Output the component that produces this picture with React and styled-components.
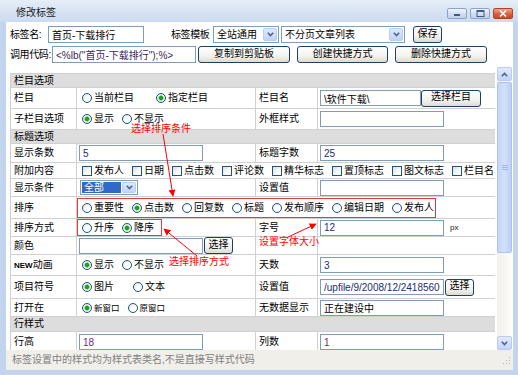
import React from "react";
import styled, { createGlobalStyle } from "styled-components";

const GlobalStyle = createGlobalStyle`
  html, body { margin: 0; padding: 0; background: #ffffff; }
  body {
    font-family: "Liberation Sans", "Noto Sans CJK SC", sans-serif;
    font-size: 10px;
    line-height: 12px;
    color: #000;
  }
  * { box-sizing: border-box; }
`;

const Window = styled.div`
  position: relative;
  width: 518px;
  height: 375px;
  display: flex;
  flex-direction: column;
  background: #c3d5ee;
  overflow: hidden;
`;

const TitleBar = styled.div`
  flex: none;
  height: 22px;
  display: flex;
  justify-content: space-between;
  align-items: flex-start;
  padding: 0 5px 0 16px;
  background: linear-gradient(#e6eef9, #d6e2f3 55%, #cddbef);
`;

const Title = styled.div`
  margin-top: 8px;
  line-height: 10px;
  color: #1b1b1b;
`;

const Controls = styled.div`
  display: flex;
  gap: 3px;
  margin-top: 8px;
`;

const CtlBtn = styled.div`
  width: 20px;
  height: 11px;
  display: flex;
  align-items: center;
  justify-content: center;
  border-radius: 2px;
  border: 1px solid ${(p) => (p.$close ? "#a8452c" : "#8aa4cb")};
  background: ${(p) =>
    p.$close
      ? "linear-gradient(#f3a38a, #dc5b3c 60%, #c9482b)"
      : "linear-gradient(#f1f5fc, #cfdcef 60%, #c0d1ea)"};
`;

const Frame = styled.div`
  flex: 1;
  display: flex;
  min-height: 0;
  padding: 0 5px 5px 6px;
`;

const Body = styled.div`
  flex: 1;
  display: flex;
  flex-direction: column;
  background: #ffffff;
  min-width: 0;
`;

const TopForm = styled.div`
  flex: none;
  height: 45px;
  display: flex;
  flex-direction: column;
  gap: 3px;
  padding: 4px 0 0 4px;
`;

const FormRow = styled.div`
  display: flex;
  align-items: center;
  height: 17px;
`;

const FormLabel = styled.span`
  flex: none;
  width: ${(p) => p.$w}px;
  margin-left: ${(p) => p.$ml || 0}px;
  white-space: nowrap;
  letter-spacing: -0.4px;
`;

const TextInput = styled.input`
  flex: none;
  width: ${(p) => p.$w}px;
  height: ${(p) => p.$h || 16}px;
  margin: 0;
  padding: 0 3px;
  border: 1px solid #7f9db9;
  background: #fff;
  font: inherit;
  font-size: 10px;
  color: ${(p) => p.$tone || "#000"};
  outline: none;
`;

const Btn = styled.button`
  flex: none;
  width: ${(p) => p.$w}px;
  height: ${(p) => p.$h || 17}px;
  margin: 0 0 0 ${(p) => p.$ml || 0}px;
  padding: 0 0 2px;
  border: 1px solid #1f3f63;
  border-radius: 3px;
  background: linear-gradient(#ffffff, #f3f2ee 60%, #dedbd2);
  font: inherit;
  font-size: 10px;
  line-height: 12px;
  color: #000;
  white-space: nowrap;
`;

const SelectBox = styled.div`
  flex: none;
  display: flex;
  width: ${(p) => p.$w}px;
  height: ${(p) => p.$h}px;
  margin-left: ${(p) => p.$ml || 0}px;
  padding: 1px;
  border: 1px solid #7f9db9;
  background: #fff;
`;

const SelectText = styled.span`
  flex: 1;
  display: flex;
  align-items: center;
  padding-left: 2px;
  margin-right: 1px;
  background: ${(p) => (p.$sel ? "#316ac5" : "transparent")};
  color: ${(p) => (p.$sel ? "#fff" : "#000")};
  white-space: nowrap;
  overflow: hidden;
`;

const SelectArrow = styled.span`
  flex: none;
  width: 14px;
  display: flex;
  align-items: center;
  justify-content: center;
  border: 1px solid #b8ccf4;
  border-radius: 2px;
  background: linear-gradient(#dfe9fe, #c1d3fa);
`;

const ScrollArea = styled.div`
  flex: 1;
  min-height: 0;
  display: flex;
  overflow: hidden;
`;

const TableWrap = styled.div`
  flex: 1;
  overflow: hidden;
  padding: 6px 0 0 4px;
`;

const Grid = styled.table`
  width: 486px;
  table-layout: fixed;
  border-collapse: collapse;
`;

const Col = styled.col`
  width: ${(p) => p.$w}px;
`;

const Row = styled.tr`
  height: ${(p) => p.$h}px;
`;

const Cell = styled.td`
  border: 1px solid #d0d0d0;
  padding: 0 0 0 3px;
  vertical-align: middle;
  white-space: nowrap;
  overflow: hidden;
`;

const SectionCell = styled(Cell)`
  background: #dddddd;
`;

const LabelCell = styled(Cell)``;

const FieldCell = styled(Cell)`
  padding-left: 2px;
`;

const Line = styled.div`
  display: flex;
  align-items: center;
`;

const Option = styled.span`
  flex: none;
  display: inline-flex;
  align-items: center;
  margin-right: ${(p) => (p.$gap ?? 5)}px;
  font-size: ${(p) => (p.$small ? 8.5 : 10)}px;
`;

const Radio = styled.span`
  flex: none;
  width: 10px;
  height: 10px;
  margin: 0 2px 0 3px;
  border: 1px solid #1d5281;
  border-radius: 50%;
  background: ${(p) =>
    p.$on
      ? "radial-gradient(circle, #1f9f1f 0 1.6px, #7fcf7f 2.4px, #f6f6f2 3px, #dcdbd4 100%)"
      : "radial-gradient(circle at 65% 65%, #ffffff 0 35%, #dcdbd4 100%)"};
`;

const Check = styled.span`
  flex: none;
  width: 10px;
  height: 10px;
  margin: 0 2px 0 3px;
  border: 1px solid #1d5281;
  background: linear-gradient(135deg, #dcdcd5, #ffffff 70%);
`;

const Mark = styled.span`
  flex: none;
  display: inline-flex;
  align-items: center;
  height: ${(p) => p.$h}px;
  margin-left: -2px;
  padding: 0 ${(p) => p.$pr}px 0 1px;
  border: 1px solid #e6393c;
`;

const Unit = styled.span`
  margin-left: 6px;
  font-size: 8px;
  color: #222;
`;

const Tiny = styled.span`
  font-size: 8px;
  font-weight: bold;
`;

const ScrollBar = styled.div`
  flex: none;
  width: 15px;
  margin: 0 1px 0 2px;
  display: flex;
  flex-direction: column;
  background: linear-gradient(90deg, #f1efe9, #fdfdfa);
`;

const ScrollBtn = styled.div`
  flex: none;
  height: 14px;
  display: flex;
  align-items: center;
  justify-content: center;
  border: 1px solid #b9cbf3;
  border-radius: 2px;
  background: linear-gradient(#e1eafd, #c3d4f8);
`;

const Thumb = styled.div`
  flex: none;
  height: ${(p) => p.$h}px;
  margin-top: 1px;
  display: flex;
  flex-direction: column;
  align-items: center;
  justify-content: center;
  gap: 1px;
  border: 1px solid #adc2ef;
  border-radius: 2px;
  background: linear-gradient(90deg, #c4d5f8, #d3e0fb 50%, #bccff6);
`;

const Grip = styled.span`
  width: 6px;
  height: 1px;
  background: #eef3fd;
  border-bottom: 1px solid #9fb6e6;
`;

const Track = styled.div`
  flex: 1;
`;

const StatusBar = styled.div`
  flex: none;
  height: 20px;
  display: flex;
  align-items: center;
  justify-content: space-between;
  padding: 0 2px 0 6px;
  background: #f1efea;
  color: #808080;
`;

const Overlay = styled.svg`
  position: absolute;
  left: 0;
  top: 0;
  pointer-events: none;
`;

const Note = styled.span`
  position: absolute;
  left: ${(p) => p.$x}px;
  top: ${(p) => p.$y}px;
  color: #ff0000;
  font-size: 10px;
  line-height: 10px;
  white-space: nowrap;
`;

const Chevron = ({ up }) => (
  <svg width="7" height="5" viewBox="0 0 7 5">
    <path
      d={up ? "M0.8 4.2 L3.5 1.4 L6.2 4.2" : "M0.8 0.8 L3.5 3.6 L6.2 0.8"}
      fill="none"
      stroke="#4d6185"
      strokeWidth="1.5"
    />
  </svg>
);

const Select = ({ w, h = 17, ml, text, selected }) => (
  <SelectBox $w={w} $h={h} $ml={ml}>
    <SelectText $sel={selected}>{text}</SelectText>
    <SelectArrow>
      <Chevron />
    </SelectArrow>
  </SelectBox>
);

export default function App() {
  return (
    <>
      <GlobalStyle />
      <Window>
        <TitleBar>
          <Title>修改标签</Title>
          <Controls>
            <CtlBtn>
              <svg width="8" height="7" viewBox="0 0 8 7">
                <rect x="1" y="4" width="6" height="2" fill="#3e5a86" />
              </svg>
            </CtlBtn>
            <CtlBtn>
              <svg width="9" height="7" viewBox="0 0 9 7">
                <rect x="1" y="0.5" width="7" height="6" fill="none" stroke="#3e5a86" />
                <rect x="1" y="0.5" width="7" height="1.5" fill="#3e5a86" />
              </svg>
            </CtlBtn>
            <CtlBtn $close>
              <svg width="8" height="7" viewBox="0 0 8 7">
                <path d="M1 0.5 L7 6.5 M7 0.5 L1 6.5" stroke="#fff" strokeWidth="1.6" />
              </svg>
            </CtlBtn>
          </Controls>
        </TitleBar>
        <Frame>
          <Body>
            <TopForm>
              <FormRow>
                <FormLabel $w={38}>标签名:</FormLabel>
                <TextInput $w={96} $h={17} defaultValue="首页-下载排行" />
                <FormLabel $w={42} $ml={27}>标签模板</FormLabel>
                <Select w={66} text="全站通用" />
                <Select w={124} ml={2} text="不分页文章列表" />
                <Btn $w={29} $ml={8}>保存</Btn>
              </FormRow>
              <FormRow>
                <FormLabel $w={42}>调用代码:</FormLabel>
                <TextInput $w={144} $h={17} $tone="#3a1f5c" defaultValue={'<%lb("首页-下载排行");%>'} />
                <Btn $w={92} $ml={2}>复制到剪贴板</Btn>
                <Btn $w={91} $ml={7}>创建快捷方式</Btn>
                <Btn $w={92} $ml={7}>删除快捷方式</Btn>
              </FormRow>
            </TopForm>

            <ScrollArea>
              <TableWrap>
                <Grid>
                  <colgroup>
                    <Col $w={66} />
                    <Col $w={179} />
                    <Col $w={62} />
                    <Col $w={179} />
                  </colgroup>
                  <tbody>
                    <Row $h={14}>
                      <SectionCell colSpan={4}>栏目选项</SectionCell>
                    </Row>
                    <Row $h={21}>
                      <LabelCell>栏目</LabelCell>
                      <FieldCell>
                        <Line>
                          <Option $gap={19}><Radio />当前栏目</Option>
                          <Option><Radio $on />指定栏目</Option>
                        </Line>
                      </FieldCell>
                      <LabelCell>栏目名</LabelCell>
                      <FieldCell>
                        <Line>
                          <TextInput $w={101} defaultValue={"\\软件下载\\"} />
                          <Btn $w={60}>选择栏目</Btn>
                        </Line>
                      </FieldCell>
                    </Row>
                    <Row $h={21}>
                      <LabelCell>子栏目选项</LabelCell>
                      <FieldCell>
                        <Line>
                          <Option><Radio $on />显示</Option>
                          <Option><Radio />不显示</Option>
                        </Line>
                      </FieldCell>
                      <LabelCell>外框样式</LabelCell>
                      <FieldCell>
                        <Line>
                          <TextInput $w={124} defaultValue="" />
                        </Line>
                      </FieldCell>
                    </Row>
                    <Row $h={14}>
                      <SectionCell colSpan={4}>标题选项</SectionCell>
                    </Row>
                    <Row $h={19}>
                      <LabelCell>显示条数</LabelCell>
                      <FieldCell>
                        <Line>
                          <TextInput $w={124} $tone="#1c2c6c" defaultValue="5" />
                        </Line>
                      </FieldCell>
                      <LabelCell>标题字数</LabelCell>
                      <FieldCell>
                        <Line>
                          <TextInput $w={124} $tone="#1c2c6c" defaultValue="25" />
                        </Line>
                      </FieldCell>
                    </Row>
                    <Row $h={16}>
                      <LabelCell>附加内容</LabelCell>
                      <FieldCell colSpan={3}>
                        <Line>
                          <Option><Check />发布人</Option>
                          <Option><Check />日期</Option>
                          <Option><Check />点击数</Option>
                          <Option><Check />评论数</Option>
                          <Option><Check />精华标志</Option>
                          <Option><Check />置顶标志</Option>
                          <Option><Check />图文标志</Option>
                          <Option><Check />栏目名</Option>
                        </Line>
                      </FieldCell>
                    </Row>
                    <Row $h={18}>
                      <LabelCell>显示条件</LabelCell>
                      <FieldCell>
                        <Line>
                          <Select w={58} h={15} ml={1} text="全部" selected />
                        </Line>
                      </FieldCell>
                      <LabelCell>设置值</LabelCell>
                      <FieldCell>
                        <Line>
                          <TextInput $w={124} defaultValue="" />
                        </Line>
                      </FieldCell>
                    </Row>
                    <Row $h={22}>
                      <LabelCell>排序</LabelCell>
                      <FieldCell colSpan={3}>
                        <Line>
                          <Mark $h={20} $pr={1}>
                            <Option><Radio />重要性</Option>
                            <Option><Radio $on />点击数</Option>
                            <Option><Radio />回复数</Option>
                            <Option><Radio />标题</Option>
                            <Option><Radio />发布顺序</Option>
                            <Option><Radio />编辑日期</Option>
                            <Option $gap={0}><Radio />发布人</Option>
                          </Mark>
                        </Line>
                      </FieldCell>
                    </Row>
                    <Row $h={18}>
                      <LabelCell>排序方式</LabelCell>
                      <FieldCell>
                        <Line>
                          <Mark $h={17} $pr={7}>
                            <Option><Radio />升序</Option>
                            <Option $gap={0}><Radio $on />降序</Option>
                          </Mark>
                        </Line>
                      </FieldCell>
                      <LabelCell>字号</LabelCell>
                      <FieldCell>
                        <Line>
                          <TextInput $w={124} $tone="#1c2c6c" defaultValue="12" />
                          <Unit>px</Unit>
                        </Line>
                      </FieldCell>
                    </Row>
                    <Row $h={18}>
                      <LabelCell>颜色</LabelCell>
                      <FieldCell>
                        <Line>
                          <TextInput $w={124} defaultValue="" />
                          <Btn $w={29} $ml={1}>选择</Btn>
                        </Line>
                      </FieldCell>
                      <LabelCell />
                      <FieldCell />
                    </Row>
                    <Row $h={21}>
                      <LabelCell><Tiny>NEW</Tiny>动画</LabelCell>
                      <FieldCell>
                        <Line>
                          <Option><Radio $on />显示</Option>
                          <Option><Radio />不显示</Option>
                        </Line>
                      </FieldCell>
                      <LabelCell>天数</LabelCell>
                      <FieldCell>
                        <Line>
                          <TextInput $w={124} $tone="#1c2c6c" defaultValue="3" />
                        </Line>
                      </FieldCell>
                    </Row>
                    <Row $h={23}>
                      <LabelCell>项目符号</LabelCell>
                      <FieldCell>
                        <Line>
                          <Option $gap={16}><Radio $on />图片</Option>
                          <Option><Radio />文本</Option>
                        </Line>
                      </FieldCell>
                      <LabelCell>设置值</LabelCell>
                      <FieldCell>
                        <Line>
                          <TextInput $w={124} $tone="#1c2c6c" defaultValue="/upfile/9/2008/12/2418560091.gif" />
                          <Btn $w={29} $ml={1}>选择</Btn>
                        </Line>
                      </FieldCell>
                    </Row>
                    <Row $h={18}>
                      <LabelCell>打开在</LabelCell>
                      <FieldCell>
                        <Line>
                          <Option $small><Radio $on />新窗口</Option>
                          <Option $small><Radio />原窗口</Option>
                        </Line>
                      </FieldCell>
                      <LabelCell>无数据显示</LabelCell>
                      <FieldCell>
                        <Line>
                          <TextInput $w={124} defaultValue="正在建设中" />
                        </Line>
                      </FieldCell>
                    </Row>
                    <Row $h={15}>
                      <SectionCell colSpan={4}>行样式</SectionCell>
                    </Row>
                    <Row $h={21}>
                      <LabelCell>行高</LabelCell>
                      <FieldCell>
                        <Line>
                          <TextInput $w={124} $tone="#7a1f70" defaultValue="18" />
                        </Line>
                      </FieldCell>
                      <LabelCell>列数</LabelCell>
                      <FieldCell>
                        <Line>
                          <TextInput $w={124} $tone="#7a1f70" defaultValue="1" />
                        </Line>
                      </FieldCell>
                    </Row>
                  </tbody>
                </Grid>
              </TableWrap>
              <ScrollBar>
                <ScrollBtn>
                  <Chevron up />
                </ScrollBtn>
                <Thumb $h={171}>
                  <Grip />
                  <Grip />
                  <Grip />
                </Thumb>
                <Track />
                <ScrollBtn>
                  <Chevron />
                </ScrollBtn>
              </ScrollBar>
            </ScrollArea>

            <StatusBar>
              <span>标签设置中的样式均为样式表类名,不是直接写样式代码</span>
              <svg width="10" height="10" viewBox="0 0 10 10">
                <g fill="#b8b4a8">
                  <rect x="8" y="2" width="1" height="1" />
                  <rect x="5" y="5" width="1" height="1" />
                  <rect x="8" y="5" width="1" height="1" />
                  <rect x="2" y="8" width="1" height="1" />
                  <rect x="5" y="8" width="1" height="1" />
                  <rect x="8" y="8" width="1" height="1" />
                </g>
              </svg>
            </StatusBar>
          </Body>
        </Frame>

        <Overlay width="518" height="375" viewBox="0 0 518 375">
          <defs>
            <marker id="tip" viewBox="0 0 10 10" refX="9" refY="5" markerWidth="7" markerHeight="7" orient="auto">
              <path d="M0 0 L10 5 L0 10 z" fill="#ff0000" />
            </marker>
          </defs>
          <line x1="163" y1="134" x2="173" y2="196" stroke="#ff0000" strokeWidth="1" markerEnd="url(#tip)" />
          <line x1="197" y1="256" x2="164" y2="229" stroke="#ff0000" strokeWidth="1" markerEnd="url(#tip)" />
          <line x1="288" y1="237" x2="316" y2="224" stroke="#ff0000" strokeWidth="1" markerEnd="url(#tip)" />
        </Overlay>
        <Note $x={131} $y={124}>选择排序条件</Note>
        <Note $x={169} $y={257}>选择排序方式</Note>
        <Note $x={259} $y={237}>设置字体大小</Note>
      </Window>
    </>
  );
}
